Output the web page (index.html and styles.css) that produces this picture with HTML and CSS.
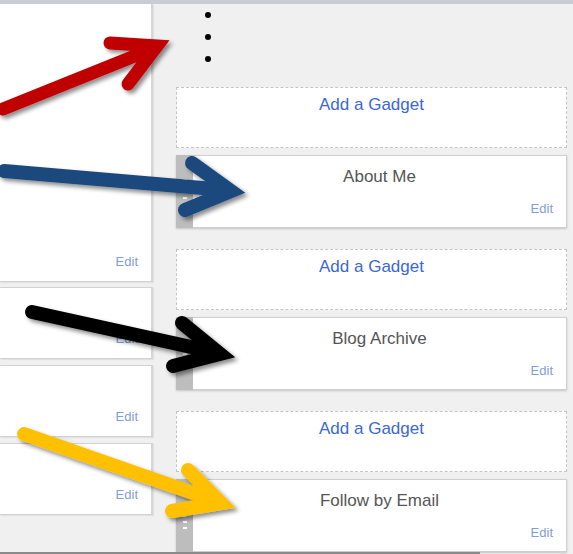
FILE: index.html
```html
<!DOCTYPE html>
<html>
<head>
<meta charset="utf-8">
<link rel="stylesheet" href="styles.css">
</head>
<body>
<div class="topbar"></div>
<div class="layout">
  <div class="left">
    <div class="panel p1"><a class="edit">Edit</a></div>
    <div class="panel p2"><a class="edit">Edit</a></div>
    <div class="panel p3"><a class="edit">Edit</a></div>
    <div class="panel p4"><a class="edit">Edit</a></div>
  </div>
  <div class="right">
    <div class="dots"><span></span><span></span><span></span></div>
    <div class="add"><a>Add a Gadget</a></div>
    <div class="widget">
      <div class="handle"><i></i><i></i><i></i><i></i><i></i></div>
      <div class="wbody"><div class="title">About Me</div><a class="edit">Edit</a></div>
    </div>
    <div class="add"><a>Add a Gadget</a></div>
    <div class="widget">
      <div class="handle"><i></i><i></i><i></i><i></i><i></i></div>
      <div class="wbody"><div class="title">Blog Archive</div><a class="edit">Edit</a></div>
    </div>
    <div class="add"><a>Add a Gadget</a></div>
    <div class="widget">
      <div class="handle"><i></i><i></i><i></i><i></i><i></i></div>
      <div class="wbody"><div class="title">Follow by Email</div><a class="edit">Edit</a></div>
    </div>
  </div>
</div>
<div class="bottomline"></div>
<svg class="arrows" width="573" height="554" viewBox="0 0 573 554">
  <defs>
    <filter id="sh" x="-20%" y="-50%" width="140%" height="200%">
      <feDropShadow dx="3" dy="3" stdDeviation="2.2" flood-color="#000" flood-opacity="0.45"/>
    </filter>
  </defs>
  <g fill="none" stroke-linecap="round" stroke-linejoin="miter" stroke-width="13" filter="url(#sh)">
    <g stroke="#c00000">
      <line x1="3" y1="109" x2="152" y2="49"/>
      <polyline points="110,43 157,46 128,84"/>
    </g>
    <g stroke="#1f497d" stroke-width="14">
      <line x1="4" y1="171" x2="226" y2="190"/>
      <polyline points="192,163 231,191 185,210"/>
    </g>
    <g stroke="#000" stroke-width="14">
      <line x1="32" y1="312" x2="214" y2="352"/>
      <polyline points="182,323 220,354 173,366"/>
    </g>
    <g stroke="#ffc000" stroke-width="14">
      <line x1="24" y1="434" x2="216" y2="501"/>
      <polyline points="188,470 221,503 172,511"/>
    </g>
  </g>
</svg>
</body>
</html>
```

FILE: styles.css
```css
* { box-sizing: border-box; }
html, body { margin: 0; padding: 0; }
body {
  width: 573px;
  height: 554px;
  overflow: hidden;
  background: #f0f0f0;
  font-family: Arial, "Liberation Sans", sans-serif;
  position: relative;
}
.topbar {
  height: 4px;
  background: #c9cdd3;
}
.layout {
  display: flex;
  align-items: flex-start;
}
.left {
  width: 153px;
  display: flex;
  flex-direction: column;
}
.panel {
  background: #fff;
  border: 1px solid #d2d2d2;
  border-left: none;
  border-right: 2px solid #d6d6d6;
  box-shadow: 1px 1px 1px rgba(0,0,0,0.06);
  display: flex;
  flex-direction: column;
  justify-content: flex-end;
  align-items: flex-end;
  padding: 0 13px 12px 0;
  width: 153px;
}
.p1 { height: 278px; border-top: none; }
.p2 { height: 72px; margin-top: 5px; }
.p3 { height: 72px; margin-top: 6px; }
.p4 { height: 72px; margin-top: 6px; }
.edit {
  font-size: 13px;
  line-height: 15px;
  color: #7f9dd9;
}
.right {
  margin-left: 23px;
  width: 391px;
  display: flex;
  flex-direction: column;
}
.dots {
  height: 83px;
  padding: 8px 0 0 29px;
  display: flex;
  flex-direction: column;
  gap: 16px;
}
.dots span {
  width: 6px;
  height: 6px;
  border-radius: 50%;
  background: #000;
}
.add {
  height: 61px;
  background: #fff;
  border: 1px dashed #c4c4c4;
  text-align: center;
  padding-top: 7px;
  margin-bottom: 7px;
}
.add a {
  font-size: 17px;
  line-height: 20px;
  color: #3a68d4;
}
.widget {
  height: 73px;
  display: flex;
  background: #fff;
  border: 1px solid #cfcfcf;
  border-left: none;
  box-shadow: 0 1px 2px rgba(0,0,0,0.18);
  margin-bottom: 21px;
}
.handle {
  width: 17px;
  background: #bdbdbd;
  margin: -1px 0;
  display: flex;
  flex-direction: column;
  justify-content: center;
  align-items: center;
  gap: 4px;
  padding-left: 1px;
}
.handle i {
  display: block;
  width: 4px;
  height: 2px;
  background: #fff;
}
.wbody {
  flex: 1;
  display: flex;
  flex-direction: column;
  padding: 11px 13px 11px 0;
}
.title {
  text-align: center;
  font-size: 17px;
  line-height: 20px;
  color: #555;
  padding-left: 13px;
}
.wbody .edit {
  margin-top: auto;
  align-self: flex-end;
}
.bottomline {
  position: absolute;
  left: 0;
  bottom: 0;
  width: 480px;
  height: 2px;
  background: #8a8a8a;
}
.arrows {
  position: absolute;
  left: 0;
  top: 0;
}
```
